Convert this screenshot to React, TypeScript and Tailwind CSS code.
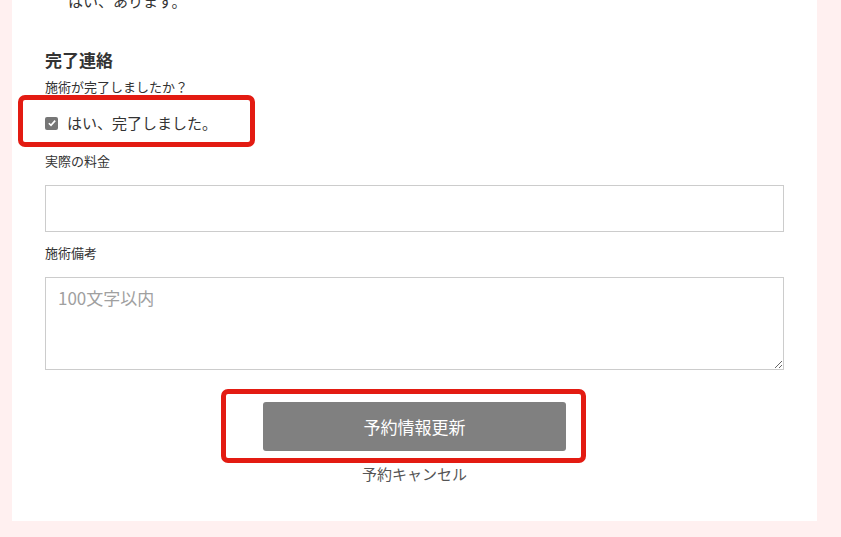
import React from 'react';

const font = { fontFamily: '"Noto Sans CJK JP", "Noto Sans", sans-serif' };

export default function App() {
    return (
        <div className="w-[841px] h-[537px] bg-[#fff0f0] overflow-hidden" style={font}>
            <div className="relative flow-root ml-[12px] w-[805px] h-[521px] bg-white">
                {/* previous question, scrolled off the top */}
                <div className="pl-[56px] -mt-[9px] text-[15px] leading-[20px] text-[#333]">はい、あります。</div>

                <div className="px-[33px]">
                    <h3 className="mt-[37px] text-[17px] leading-[24px] font-bold text-[#333]">完了連絡</h3>
                    <p className="mt-[7px] text-[13px] leading-[16px] text-[#333]">施術が完了しましたか？</p>

                    <label className="mt-[18px] flex items-center h-[20px]">
                        <span className="flex items-center justify-center w-[13px] h-[13px] rounded-[2px] bg-[#767676]">
                            <svg viewBox="0 0 12 12" className="w-[10px] h-[10px]">
                                <path d="M2.2 6.3 L4.8 8.8 L9.8 3.2" fill="none" stroke="#fff" strokeWidth="2" />
                            </svg>
                        </span>
                        <span className="ml-[9px] text-[15px] text-[#333]">はい、完了しました。</span>
                    </label>

                    <p className="mt-[20px] text-[13px] leading-[16px] text-[#333]">実際の料金</p>
                    <input type="text" className="mt-[16px] block w-[739px] h-[47px] border border-[#ccc] outline-none" />

                    <p className="mt-[13px] text-[13px] leading-[16px] text-[#333]">施術備考</p>
                    <textarea
                        placeholder="100文字以内"
                        className="mt-[16px] block w-[739px] h-[93px] border border-[#ccc] px-[12px] py-[8px] text-[17px] leading-[24px] placeholder:text-[#a0a0a0] outline-none"
                        style={font}
                    />

                    <div className="mt-[32px] flex flex-col items-center">
                        <button className="w-[303px] h-[49px] rounded-[3px] bg-[#808080] text-white text-[17px]">予約情報更新</button>
                        <a className="mt-[13px] text-[15px] leading-[20px] text-[#555]">予約キャンセル</a>
                    </div>
                </div>

                {/* annotation boxes */}
                <div className="absolute left-[6px] top-[95px] w-[237px] h-[52px] border-[5px] border-[#e31b12] rounded-[7px]" />
                <div className="absolute left-[209px] top-[389px] w-[365px] h-[74px] border-[5px] border-[#e31b12] rounded-[7px]" />
            </div>
        </div>
    );
}
